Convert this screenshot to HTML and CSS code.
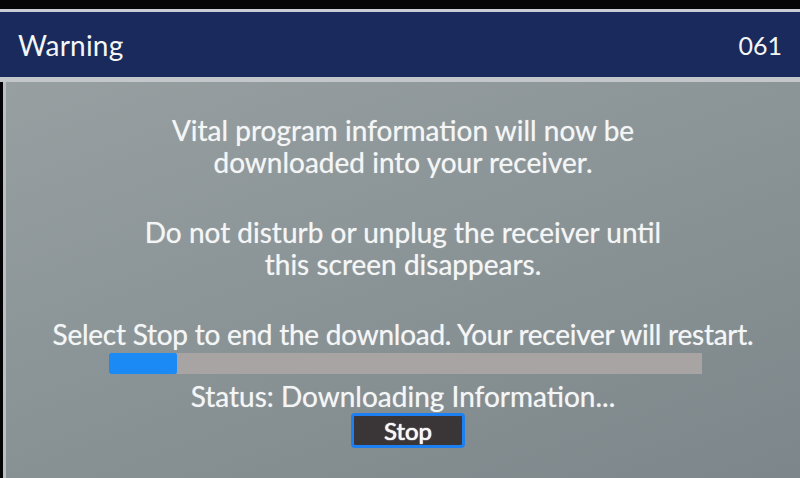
FILE: index.html
```html
<!DOCTYPE html>
<html lang="en">
<head>
    <meta charset="UTF-8" />
    <title>Warning</title>
    <link rel="stylesheet" href="styles.css">
</head>
<body>
    <div class="screen">
        <!-- header bar -->
        <div class="header">
            <span class="title">Warning</span>
            <span class="code">061</span>
        </div>

        <!-- message area -->
        <div class="content">
            <p class="msg">Vital program information will now be<br>downloaded into your receiver.</p>
            <p class="msg">Do not disturb or unplug the receiver until<br>this screen disappears.</p>
            <p class="msg select">Select Stop to end the download. Your receiver will restart.</p>
            <div class="progress">
                <div class="progress-fill" style="width: 11.5%;"></div>
            </div>
            <p class="status">Status: Downloading Information...</p>
            <button class="stop-btn">Stop</button>
        </div>
    </div>
</body>
</html>
```

FILE: styles.css
```css
* {
    margin: 0;
    padding: 0;
    box-sizing: border-box;
}

body {
    background-color: #050507;
    font-family: Lato, 'Open Sans', sans-serif;
    color: #f4f6f6;
    width: 800px;
    height: 478px;
    overflow: hidden;
}

.screen {
    padding-top: 9px;
    height: 478px;
    display: flex;
    flex-direction: column;
}

.header {
    display: flex;
    justify-content: space-between;
    align-items: center;
    height: 73px;
    background-color: #1a2a5c;
    border-top: 3px solid #c9cdd6;
    border-bottom: 5px solid #c3c7ca;
    padding: 0 18px 0 18px;
}

.header .title {
    font-size: 28px;
    letter-spacing: 0.2px;
}

.header .code {
    font-size: 25px;
}

.content {
    flex: 1;
    display: flex;
    flex-direction: column;
    align-items: center;
    background: linear-gradient(160deg, #979fa1 0%, #8c9597 40%, #7d868a 100%);
    border-left: 3px solid #b9bfc2;
    margin-left: 3px;
    padding-top: 32px;
}

.msg {
    font-size: 28px;
    line-height: 32px;
    text-align: center;
    margin-bottom: 38px;
    text-shadow: 0 0 1px rgba(255, 255, 255, 0.6);
}

.msg.select {
    margin-bottom: 3px;
    letter-spacing: -0.25px;
}

.progress {
    width: 593px;
    height: 21px;
    margin-left: 4px;
    background-color: #a8a4a4;
}

.progress-fill {
    height: 100%;
    background-color: #1b8af5;
    border-radius: 2px;
}

.status {
    font-size: 28px;
    line-height: 32px;
    margin-top: 6px;
    text-shadow: 0 0 1px rgba(255, 255, 255, 0.6);
}

.stop-btn {
    margin-top: 1px;
    margin-left: 10px;
    width: 114px;
    height: 35px;
    background-color: #3a3537;
    border: 3px solid #1c80f2;
    border-radius: 4px;
    color: #f6f6f6;
    font-family: Lato, sans-serif;
    font-size: 24px;
    text-shadow: 0 0 1px #fff, 0 0 1px #fff;
}
```
